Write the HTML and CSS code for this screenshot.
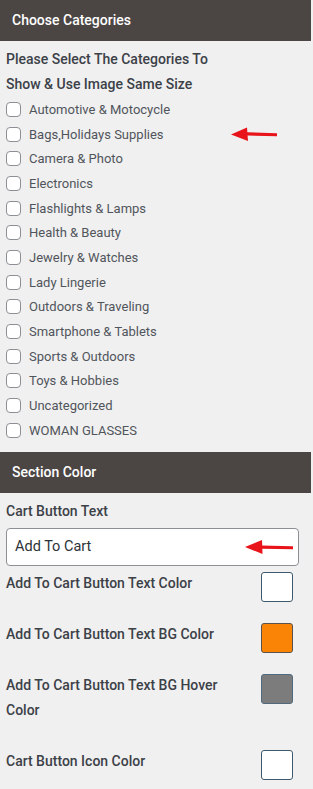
FILE: index.html
```html
<!DOCTYPE html>
<html lang="en">
<head>
    <meta charset="UTF-8">
    <meta name="viewport" content="width=device-width, initial-scale=1.0">
    <title>Widget Settings</title>
    <link rel="stylesheet" href="styles.css">
</head>
<body>
<div class="panel">
    <h3 class="section-title">Choose Categories</h3>
    <p class="intro">Please Select The Categories To Show &amp; Use Image Same Size</p>
    <ul class="category-list">
        <li><label><input type="checkbox"> Automotive &amp; Motocycle</label></li>
        <li class="has-arrow"><label><input type="checkbox"> Bags,Holidays Supplies</label>
            <svg class="arrow arrow-cat" width="48" height="16" viewBox="0 0 48 16"><path d="M16 6.2 L46 7.2 L46 10.2 L16 9.6 Z" fill="#e8141a"/><path d="M0 8.5 L16 1.5 L17 15 Z" fill="#e8141a"/></svg>
        </li>
        <li><label><input type="checkbox"> Camera &amp; Photo</label></li>
        <li><label><input type="checkbox"> Electronics</label></li>
        <li><label><input type="checkbox"> Flashlights &amp; Lamps</label></li>
        <li><label><input type="checkbox"> Health &amp; Beauty</label></li>
        <li><label><input type="checkbox"> Jewelry &amp; Watches</label></li>
        <li><label><input type="checkbox"> Lady Lingerie</label></li>
        <li><label><input type="checkbox"> Outdoors &amp; Traveling</label></li>
        <li><label><input type="checkbox"> Smartphone &amp; Tablets</label></li>
        <li><label><input type="checkbox"> Sports &amp; Outdoors</label></li>
        <li><label><input type="checkbox"> Toys &amp; Hobbies</label></li>
        <li><label><input type="checkbox"> Uncategorized</label></li>
        <li><label><input type="checkbox"> WOMAN GLASSES</label></li>
    </ul>

    <h3 class="section-title">Section Color</h3>
    <div class="field">
        <div class="field-label">Cart Button Text</div>
        <div class="input-wrap">
            <input class="text-input" type="text" value="Add To Cart">
            <svg class="arrow arrow-input" width="50" height="16" viewBox="0 0 50 16"><path d="M16 6.4 L48 7.2 L48 10.2 L16 9.8 Z" fill="#e8141a"/><path d="M0 8 L17 1 L17.5 15 Z" fill="#e8141a"/></svg>
        </div>
    </div>
    <div class="color-row">
        <div class="field-label">Add To Cart Button Text Color</div>
        <span class="swatch swatch-white"></span>
    </div>
    <div class="color-row">
        <div class="field-label">Add To Cart Button Text BG Color</div>
        <span class="swatch swatch-orange"></span>
    </div>
    <div class="color-row">
        <div class="field-label">Add To Cart Button Text BG Hover Color</div>
        <span class="swatch swatch-gray"></span>
    </div>
    <div class="color-row">
        <div class="field-label">Cart Button Icon Color</div>
        <span class="swatch swatch-white"></span>
    </div>
</div>
</body>
</html>
```

FILE: styles.css
```css
body {
    margin: 0;
    padding: 0;
    background-color: #f0f0f0;
    font-family: Roboto, "Liberation Sans", Arial, sans-serif;
}

.panel {
    width: 311px;
    position: relative;
}

.section-title {
    margin: 0;
    height: 41px;
    line-height: 40px;
    padding-left: 12px;
    background-color: #4b4644;
    color: #fff;
    font-size: 14px;
    font-weight: 500;
}

.intro {
    margin: 0;
    padding: 6px 90px 0 6px;
    font-size: 14px;
    font-weight: 500;
    line-height: 25px;
    color: #3c4148;
}

.category-list {
    list-style-type: none;
    margin: 0 0 9px;
    padding: 0;
}

.category-list li {
    height: 24.7px;
    position: relative;
}

.category-list label {
    display: flex;
    align-items: center;
    height: 100%;
    padding-left: 6px;
    font-size: 13px;
    color: #50555c;
}

.category-list input {
    -webkit-appearance: none;
    appearance: none;
    width: 15px;
    height: 15px;
    margin: 0 8px 0 0;
    border: 1px solid #8c8f94;
    border-radius: 4px;
    background-color: #fff;
}

.arrow {
    position: absolute;
}

.arrow-cat {
    left: 231px;
    top: 4px;
}

.field {
    padding: 6px 12px 0 6px;
}

.field-label {
    font-size: 14px;
    font-weight: 500;
    line-height: 25px;
    color: #3c4148;
}

.input-wrap {
    position: relative;
    margin-top: 4px;
}

.text-input {
    box-sizing: border-box;
    width: 293px;
    height: 38px;
    padding: 0 8px;
    border: 1px solid #8c8f94;
    border-radius: 4px;
    background-color: #fff;
    font-family: Roboto, "Liberation Sans", Arial, sans-serif;
    font-size: 14.5px;
    color: #2c3338;
}

.arrow-input {
    left: 239px;
    top: 11px;
}

.color-row {
    display: flex;
    align-items: flex-start;
    gap: 20px;
    padding: 0 18px 0 6px;
}

.field + .color-row {
    margin-top: 5px;
}

.color-row .field-label {
    flex: 1;
    padding-bottom: 26px;
}

.swatch {
    flex: none;
    box-sizing: border-box;
    width: 32px;
    height: 30px;
    margin-top: 1px;
    border-radius: 3px;
    border: 1px solid #3d5a6c;
}

.swatch-white {
    background-color: #fff;
}

.swatch-orange {
    background-color: #f98406;
    border-color: #5a534d;
}

.swatch-gray {
    background-color: #7c7c7c;
    border-color: #4e6a7c;
}
```
